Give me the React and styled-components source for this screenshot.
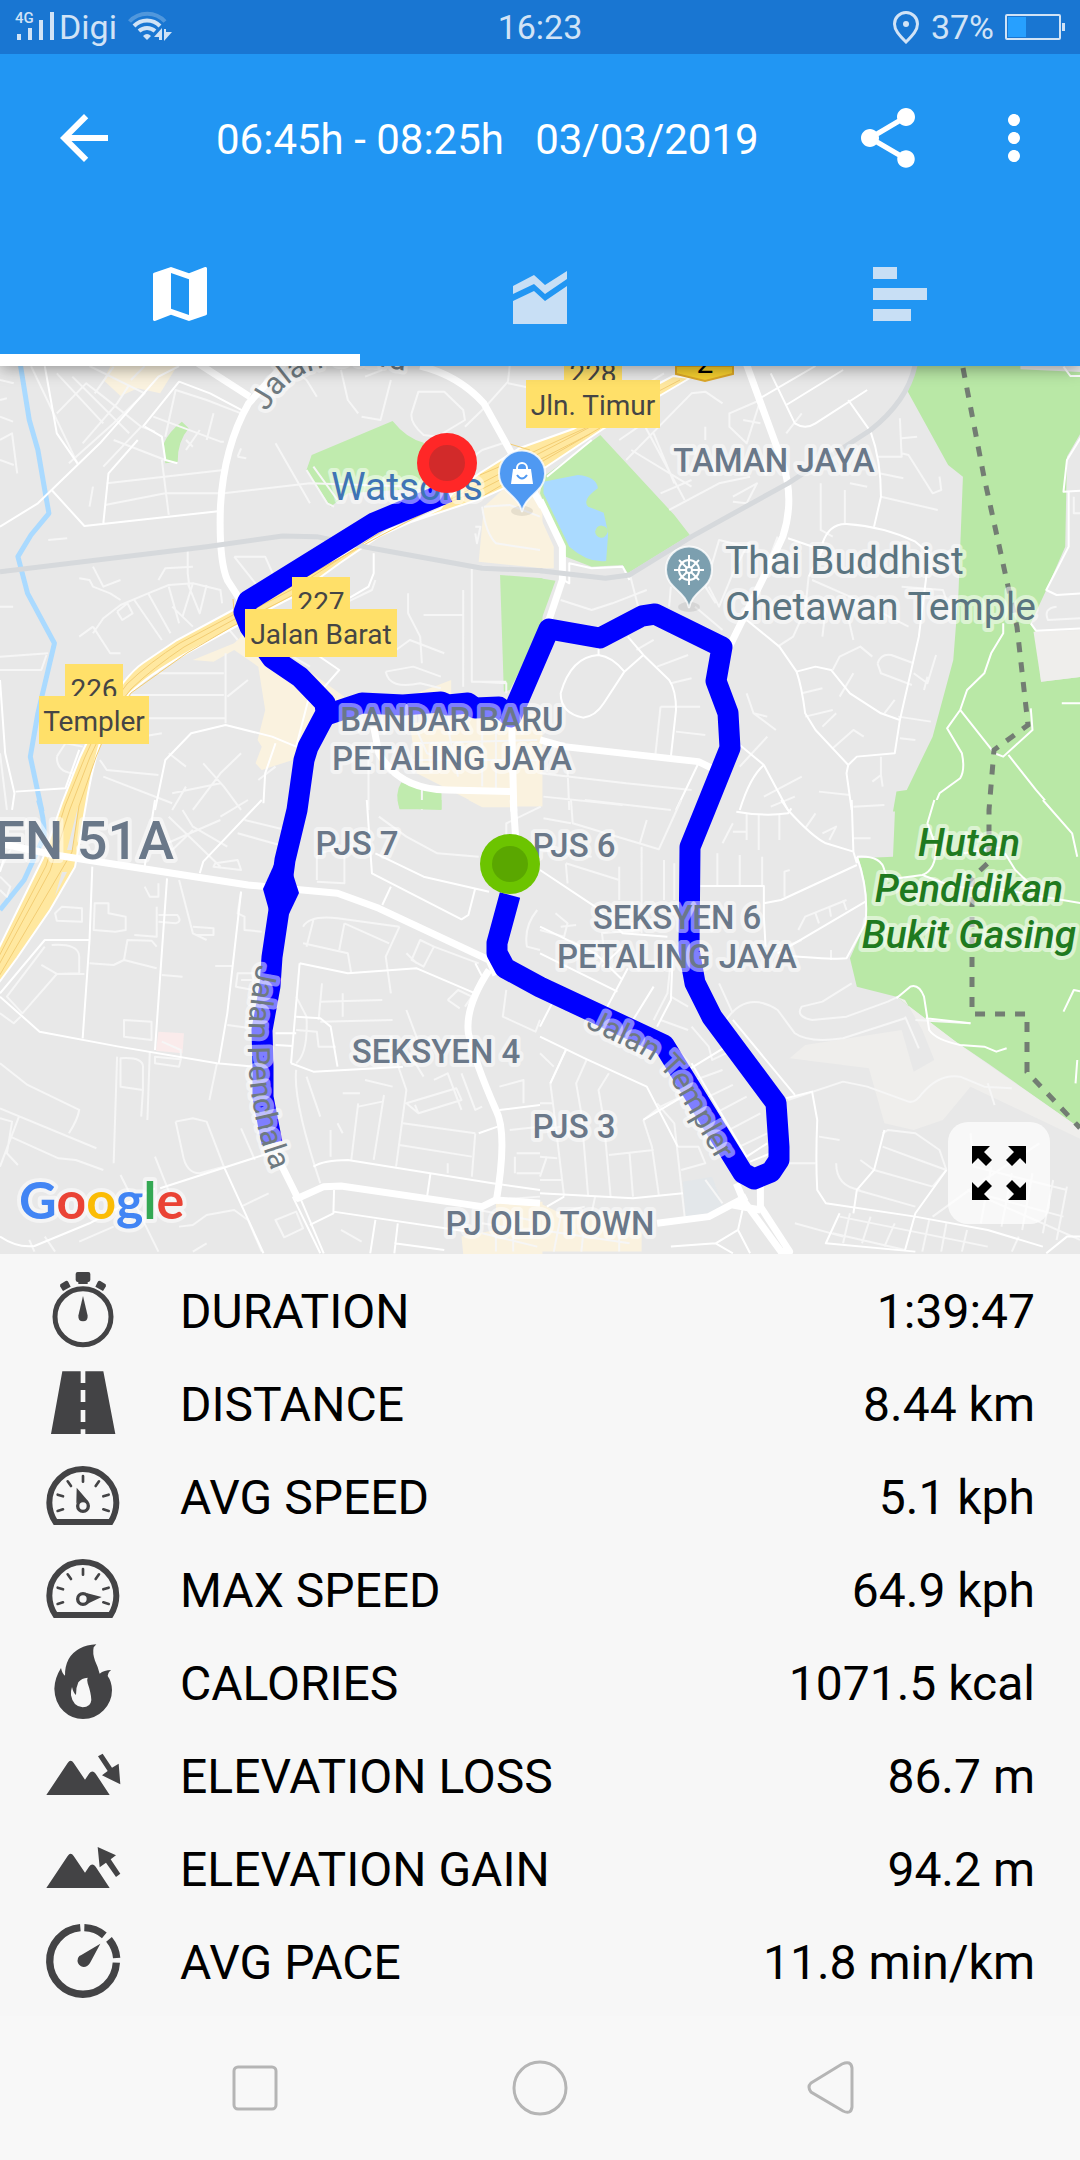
import React from "react";
import styled, { createGlobalStyle } from "styled-components";
import { MdArrowBack, MdMap, MdMoreVert, MdShare } from "react-icons/md";

const GlobalStyle = createGlobalStyle`
  :root {
    --primary: #2196f3;
    --primaryDark: #1976d2;
    --surface: #f7f7f7;
    --icon: #434345;
    --statusText: #d1e3f6;
  }
  * {
    box-sizing: border-box;
  }
  body {
    margin: 0;
    background: var(--surface);
    font-family: Roboto, sans-serif;
  }
`;

/* ---------- status bar ---------- */

function StatusBar() {
  return (
    <StatusWrapper>
      <StatusGroup>
        <svg width="40" height="32" viewBox="15 12 40 32" fill="currentColor">
          <text x="15" y="24" fontSize="15" fontWeight="500">
            4G
          </text>
          <path d="M17 35h4v6h-4zM28 29h4v12h-4zM39 21h4v20h-4zM50 13h4v28h-4z" />
        </svg>
        <span>Digi</span>
        <WifiIcon />
      </StatusGroup>
      <span>16:23</span>
      <StatusGroup $end>
        <svg width="28" height="34" viewBox="892 10 28 34" fill="none">
          <path
            d="M906 42C899 35 894.500 30 894.500 24A11.500 11.500 0 0 1 917.500 24C917.500 30 913 35 906 42Z"
            stroke="currentColor"
            strokeWidth="3"
          />
          <circle cx="906" cy="24" r="3" fill="currentColor" />
        </svg>
        <span>37%</span>
        <svg width="60" height="28" viewBox="1004 13 60 28">
          <rect x="1005" y="15" width="54" height="24" rx="1" fill="none" stroke="currentColor" strokeWidth="2" />
          <rect x="1007" y="17" width="18" height="20" fill="#27a0ff" />
          <rect x="1061" y="23" width="3" height="8" fill="currentColor" />
        </svg>
      </StatusGroup>
    </StatusWrapper>
  );
}

function WifiIcon() {
  return (
    <svg width="46" height="32" viewBox="127 12 46 32" fill="none" stroke="currentColor" strokeWidth="4">
      <path d="M129.500 22.500A24 24 0 0 1 165 22.500" opacity="0.3" />
      <path d="M134 27A18 18 0 0 1 160 27" />
      <path d="M139 32A12 12 0 0 1 155 32" />
      <path d="M143 37Q147 33 151 37L147 41Z" fill="currentColor" stroke="none" />
      <path d="M154 38L162 29V41H159V38ZM164 42V30H166V33H172L164 42Z" fill="currentColor" stroke="none" />
    </svg>
  );
}

/* ---------- map ---------- */

// Each tile is drawn on its own 1568 x 1350 grid and placed on the map by its origin.
const tiles = [
  {
    id: "nw",
    x: 0,
    y: -6,
    areas: [
      ["#faf2df", "M300 60L330 0H525L465 100L400 85L350 108Z"],
      ["#faf2df", "M1405 440L1480 370L1575 385V625L1390 605Z"],
      ["#faf2df", "M560 900L680 850L710 820L840 890L1000 1010L920 1080L850 1200L760 1230L742 1210L760 1160L748 1140L770 1050L750 920L680 870L620 905Z"],
      ["#faf2df", "M1190 1090L1575 1060V1340H1400L1210 1240Z"],
      ["#faf2df", "M1210 1000L1310 960V1010Z"],
      ["#c0ebae", "M905 285L1140 183Q1180 235 1230 248L1300 380L1010 400L960 440L890 330Z"],
      ["#c0ebae", "M528 185L548 205Q515 245 516 305L480 310L476 250Q490 215 528 185Z"],
      ["#c0ebae", "M1452 645L1575 655V800L1480 990L1463 995Z"],
      ["#c0ebae", "M1165 1268L1225 1288L1282 1300V1348H1160Q1145 1300 1165 1268Z"],
    ],
    water: ["M57 0L85 180L110 270L130 390L142 460L90 525L52 590L80 700L158 850L110 1060L88 1190L122 1355"],
    rail: ["M0 635L600 560L820 528L920 530L1080 565L1400 625L1575 632"],
    minor: [
      "M165 160L250 70L300 110L410 200M210 50L375 220M165 40L300 190M90 18L225 310M260 18L420 100L330 190L200 310M300 320L410 200L450 215M330 240L480 300M275 100L330 20M375 75L340 130L240 250M420 18L380 60M0 60L40 70M0 120L20 115M0 170L38 185M0 240L35 220L50 340M0 300L40 315",
      "M445 170L640 245L650 245M480 230L510 90L600 120L700 160M470 300L490 465M310 370L650 330M305 435L480 400L645 400M270 380L260 440M580 210L540 270M620 160L600 240M540 240L560 260M650 400L900 370L1210 380M800 250L900 430M690 290L715 295M690 290L700 265",
      "M850 30L890 60L920 110M990 30L1010 120L1040 160M1060 50L1110 30M1050 170L1105 180L1135 60M1195 160L1215 95L1290 95L1345 150L1350 180L1270 230L1230 225Q1190 190 1195 160M1475 65L1480 18M1475 65L1410 140L1350 200M1475 70L1568 90M1310 340L1400 270L1460 250",
      "M890 330L950 430L970 440M910 320L980 420M1405 440L1480 435L1568 470M1400 440Q1410 520 1440 550L1568 570M1380 500L1395 500L1385 550L1380 520M545 570L545 640L550 680M270 620L300 680L350 660M230 655L260 660L270 680L320 700L350 720M140 540L195 535M0 740H38",
      "M270 820L300 775L350 735L430 700L490 675L560 670L640 690L645 730M340 755L370 730L385 760L355 780L340 755M390 720L470 840M430 700L495 820M490 680L520 790M560 670L530 770M600 675L580 760L545 670M270 800L230 830M270 800L320 880L350 880M500 740L560 800M460 660L480 625L560 620",
      "M400 940H650M380 1005H650M320 1075H655M655 880V1090M0 890L140 880M0 930L120 930L135 885M165 1190L190 1150L240 1160M165 1190Q165 1240 220 1240M290 1200L310 1230L460 1245M300 1150L470 1120M590 1210L650 1280L700 1350M300 1250L500 1330M490 1180L540 1220M640 1270L500 1300M750 1260L800 1220M700 1180L640 1240L560 1350M540 1280L500 1350",
      "M1185 700V760L1220 830M1150 870L1190 840L1290 880M1220 830L1225 910M1230 765L1345 765M1370 620V965H1470M1345 690V980M1120 935Q1130 990 1220 970L1280 985M1120 935L1200 920L1280 950M1090 660L1080 690L1000 730M1070 1170V1350M1390 965L1470 970V1000M1400 1100V1280M1440 1080V1290M1200 1150L1560 1140M1200 1200H1560M680 590L770 590L800 660M680 590L780 720M850 890L900 920",
      "M0 1180L20 1350M1210 1110L1240 1180L1290 1200M1300 1100L1330 1250M1225 1290V1350M600 800L650 790L690 840M720 960L660 1010",
    ],
    medium: [
      "M0 500L110 430L290 250L460 50L520 18M130 18L165 220L225 310M150 390L245 498L640 453M110 430L0 500M420 200L470 230L480 300L515 310M415 200L520 65L610 100L710 155L705 165M300 490L315 340L400 240",
      "M450 1350L480 1200L555 1120L655 1095L790 1130L860 1160M0 960L15 1180L42 1300L35 1350M860 1160L900 1000M1085 580V640L1070 680L1005 720M900 870L985 930L900 1030",
      "M765 1330L770 1240L800 1150M45 1295L190 1285L230 1170",
    ],
    major: [
      "M560 0L725 110M835 0L722 130Q650 260 640 440Q635 600 660 660L710 740",
      "M1220 18Q1330 45 1405 130L1480 270L1575 440",
      "M1085 1100L1100 1180Q1160 1290 1300 1290L1490 1295M1485 1060L1492 1355",
    ],
  },
  {
    id: "ne",
    x: 540,
    y: -6,
    areas: [
      ["#b9e8a6", "M1090 0L1068 95L1185 315L1228 350L1215 700L1200 900L1140 1130L1065 1290L1035 1295L1025 1355H1575V0Z"],
      ["#e8e8e8", "M1395 0V28L1575 36V0ZM1575 210L1530 290L1525 560L1470 690L1425 790L1440 815L1455 965L1575 950Z"],
      ["#efeeec", "M1433 815L1455 965L1575 950V810Z"],
      ["#c0ebae", "M10 350L175 225L390 465L435 525L255 640L240 615L150 620L75 590L0 400Z"],
      ["#c0ebae", "M0 655L45 662L0 790Z"],
      ["#faf2df", "M0 470L40 560V625H0Z"],
      ["#aadaff", "M10 365L110 345Q165 350 168 385Q120 420 140 440L185 458L198 520L192 603Q140 610 85 560L10 400Z"],
      ["#c0ebae", "M160 515Q165 495 180 497Q197 500 197 515Q190 535 176 533Q162 530 160 515Z"],
    ],
    water: [],
    rail: ["M0 632L190 655L260 645L440 530L720 370L960 210Q1070 120 1090 10"],
    minor: [
      "M250 300L440 100L480 95L530 130M300 190L420 420M330 220L390 370M265 270L440 380M350 400L440 360M375 450L520 370L610 350M550 160L640 120L600 250L550 200ZM590 180L640 190M560 410L630 370L600 430L560 425M480 240V200M230 240L300 190M280 90L360 40",
      "M1045 175L1050 290L980 290M1050 235L1095 230M1050 280L1070 285L1140 400L1165 390L1160 350M990 410L1155 450M985 340L1055 355M815 370V510L850 530M885 390V490M900 370L950 380M715 220L760 160",
      "M380 680L375 740M490 680L520 740L560 640L600 560M450 740L530 810M260 640L285 740M60 720L150 750L210 730L310 690M510 730L480 680L520 540L600 560M780 650L770 750L735 830L690 860M790 660L900 710L1070 800M690 530L650 640M830 740L820 830M890 750L910 840M1050 680L1170 690L1180 720",
      "M850 930L870 890L930 860L965 890M980 910Q990 880 1020 885L1085 910M1080 975L990 940L980 910M910 940L870 1010M1150 885L1125 970L1085 940M1125 950L1115 990M760 1000L820 985M770 1070L850 1050M600 1000L620 1060L685 1110M620 1060L660 1070M850 1165L910 1110L940 1130M1030 1020L1000 1060M1040 1070L1135 1085M1045 1135L1090 1140M990 1190V1245L965 1265M990 1245L995 1280M820 1100L860 1060M650 1310L760 1250M670 1340L740 1310M810 1295L900 1305M580 1220L660 1130M340 920L430 885M380 970L440 955M350 1040L465 1040M335 1185L350 1040M395 1115L480 1125M280 870L330 840M0 1240L250 1270M250 1270L440 1290M10 1310L240 1335M80 1230L85 1350M1550 410V460L1568 460M1500 740Q1460 745 1475 780L1568 775",
    ],
    medium: [
      "M630 120L800 18M670 40L740 190Q770 210 800 190L950 90M715 135L880 30M895 120L960 215Q990 300 990 410L970 500M820 550Q840 490 890 492Q1000 500 1090 545L1130 580L1100 830L1045 1080L1030 1180L920 1190L895 1215",
      "M600 780L695 860L745 935Q760 980 770 1060L800 1110L895 1215L890 1240L905 1350M745 935L800 920L845 930L900 1000L990 1060L1045 1080M720 535L820 570L780 650",
      "M170 885Q90 890 60 1000Q60 1060 125 1073Q160 1070 185 1030L245 935Q210 890 170 885V860M245 935L300 885M255 830L300 885L375 960Q395 990 395 1050L380 1190M580 1155L650 1215L720 1350M650 1215Q610 1250 580 1350M395 1350L460 1210",
      "M1345 790V820L1310 880L1290 940L1240 990L1220 1050L1182 1105L1225 1180Q1235 1230 1220 1255L1160 1300L1140 1350M1220 1050L1320 1180L1345 1190L1430 1110L1425 1045M1360 1185L1440 1290L1490 1350M1515 1030H1575",
      "M1575 225L1530 300L1520 395L1575 392M1535 395V560L1470 690L1500 705L1575 700M1425 790L1440 812L1575 805M1520 20L1540 48H1575",
      "M20 350L150 240M60 655L85 670V610L150 625L240 620L260 660",
    ],
    major: ["M595 0L705 310Q740 420 705 530L660 630L550 860", "M0 420L65 560V660L0 860", "M0 1140L70 1160L460 1205L500 1225"],
  },
  {
    id: "sw",
    x: 0,
    y: 434,
    areas: [
      ["#c0ebae", "M1155 0H1282V30L1160 25Z"],
      ["#faf2df", "M1360 0H1500V22H1400Z"],
      ["#faebeb", "M460 695L534 700L530 760L453 752Z"],
      ["#faf2df", "M1440 1200L1575 1205V1362H1345L1340 1310L1440 1290Z"],
    ],
    water: ["M112 0Q130 60 128 110L70 240L0 330"],
    rail: [],
    minor: [
      "M160 340L180 320L238 325V365L165 362ZM275 310H315V340L365 350V390L335 395L272 390ZM420 260L435 290L460 290V250M460 345L515 345Q530 365 510 370L460 365M520 240L560 400L600 420M560 380L620 385V405H570M390 405L455 410V320M150 435Q230 430 230 470V520L165 522L65 640L20 590L130 440M120 495L165 522H245M260 490L330 495L360 480L370 420L440 422L455 440M360 480L455 505M470 525L530 530",
      "M360 660L440 665V720L360 710ZM350 775Q420 770 415 805V870L350 860ZM450 770L525 778L520 800L450 790ZM340 770L330 1090M415 870L410 950M435 755L428 960M470 725L525 750V780M630 790L608 900M700 275L690 340L710 350V390L760 395M690 520H735V570L685 560ZM700 540L735 540M625 498H675M660 675L730 685",
      "M0 790L80 855L230 930Q225 960 200 1000M0 925L280 1045M55 950L0 1100M0 955L35 965L20 1060L52 1095M30 1010L170 1075L220 1080L300 1110M510 965L560 955L600 965L650 1100L580 1120Q540 1120 530 1060L510 965M450 1070L500 1200M700 985L740 1080M350 1125L460 1355M230 1325L330 1280M520 1280L560 1275L600 1245L680 1230L720 1260L760 1355M700 1220L780 1180M560 1355L600 1330M130 1310L160 1355M85 1320L100 1355M800 1260L860 1235L880 1285L825 1312ZM990 1290L1050 1325",
      "M530 30L560 80L660 140M490 50L640 200M560 90L500 150L480 120M440 150L640 60M640 50L720 0M625 190L690 180L700 210L620 200ZM690 100L830 140M710 60L830 90M920 240V170Q950 140 1000 160L1000 250L920 245M880 380Q900 345 980 355L1160 380M880 430L1010 460L1020 520M910 360L890 440M1000 370L985 450M1160 380L1120 470L1135 580M1000 370L1130 430M1220 420L1260 440L1230 500L1195 480ZM1260 440L1390 490M1180 460L1210 490",
      "M935 550L925 660M995 580V650M930 605L1110 600M930 665L1140 660M1180 630L1220 740M860 690L920 695L925 740L975 740M860 590L890 650Q895 760 860 790M1300 600L1330 570L1370 590L1350 620M1300 600L1335 625M1150 780L1180 870L1150 1100M1200 780L1230 830M1260 840L1300 820L1340 930M1180 910L1325 865L1340 900L1215 940ZM1215 940L1205 915M1340 820L1380 930L1400 920M1040 910L1020 1080M1115 885L1085 1080M1040 920L1110 905M960 990V1070M1170 970L1380 1000M1160 1035L1370 1070M1380 1000L1370 1130M995 880H1045M860 810Q850 900 930 1150M890 830L930 950M1060 840L1140 860M1450 860L1520 840V910M1300 1090V1120M1480 990L1568 980",
      "M1570 20L1470 70L1470 130M1100 50L1180 110L1270 160L1390 170M1470 570L1460 650L1555 695L1568 660M1500 1060H1568M1500 1120H1568M1495 1120V1070M1440 1200L1568 1190M1390 1230L1540 1260M1400 1270L1568 1300M1400 1300L1560 1340M1440 1240V1355M1490 1240V1355M980 970L995 1000M1560 330Q1520 380 1530 440L1568 450",
      "M0 210L40 130M0 230L30 260L20 290L0 270M75 330H120M75 330L60 400L0 500M0 640L40 670L60 650",
    ],
    medium: [
      "M268 200L260 420L240 715M485 235L450 750M700 275L660 640L635 790M0 590L115 695L345 740L630 790L740 800M0 580L130 420H260M580 220L590 185L760 0M420 200L450 0M10 180L0 215",
      "M870 490L1010 520L1210 505L1380 580M1065 0L1080 220L1340 358L1360 345L1380 265M1090 160L1230 230L1420 275M1110 315L1135 260M860 650L930 655L960 680L980 800M845 790L910 815L1170 800M870 490L845 790M800 700H860M800 735L850 738",
      "M910 1100Q940 1080 1010 1080L1430 1150L1568 1170M465 1165L780 1060M650 1100L765 1360M850 1190L930 1360M870 1190L940 1360M970 1170L968 1240L900 1275M968 1235L1390 1300M1090 1260L1075 1360M1155 1270L1145 1360M1250 1120L1240 1190M1145 1330L1290 1350M1450 930L1568 915M1390 1000L1445 980M0 1310Q50 1345 100 1338L260 1270L450 1165M1380 490L1400 530",
    ],
    major: [
      "M0 130L160 165L720 255L980 280L1100 325L1420 480L1440 525",
      "M1420 510Q1350 620 1360 700Q1380 790 1440 930Q1475 1000 1440 1210",
      "M800 1060L865 1195L940 1160L990 1158L1400 1220L1440 1200L1568 1210M1490 0L1497 110",
    ],
  },
  {
    id: "se",
    x: 540,
    y: 434,
    areas: [
      ["#b9e8a6", "M1032 0L1025 170L925 175Q960 280 945 370L900 475L920 560L1035 590L1200 720L1300 790L1575 990V0Z"],
      ["#efeeec", "M1035 590L1220 735L1575 990V1020L1250 860L1170 960L1085 990L1000 970L955 805L725 775L770 735L1050 690L1085 815L1145 780L1110 690L1060 600Z"],
      ["#e3e7ea", "M415 1145L500 1130L530 1215L490 1240L422 1250Z"],
      ["#faf2df", "M0 1210L60 1240H250L295 1300V1355H0Z"],
    ],
    water: [],
    rail: [],
    minor: [
      "M90 0L95 70L345 148L410 0M10 55L90 70M130 0L380 30M75 190L230 240M75 190L80 250M230 200V300M295 140V400M0 150L150 170M310 60L290 130M360 180V300M390 190V300M515 160V255M580 165V255M645 170V255M600 40V120M635 45V150M695 45V120M560 95H600M530 130L560 70M770 85L800 40M820 100L860 80L840 120M910 20L1000 15M910 115H960M710 290V215L725 210M750 390L770 350L890 300M800 340L810 370M840 320L845 350M880 300L890 330M845 450V480M640 470L760 420",
      "M45 340L80 370L70 410L0 390M60 380L105 375M190 490L180 400L290 390M170 500L200 440M350 660L430 690M380 590L430 620M440 680L490 740L500 780L540 760M330 660L370 580L380 480M520 550L560 640M500 690L540 660Q600 570 690 630L740 700Q780 730 880 715L1060 655M905 550L820 605L760 620Q740 650 790 660L890 650L1010 605L1040 590M1060 650L1100 745M450 840L530 810M470 900L560 855M490 950L600 890M530 1000L640 940M560 1050L660 1000",
      "M300 960L350 920L430 880M0 760L40 800M75 750L30 850L40 930L70 1190M135 780L105 850L120 940L140 1190M200 820L170 870L185 960L205 1190M0 910H40M0 990L60 980M200 1065L330 1050M260 1060L270 1190M300 960L325 1040L345 1185M340 910L390 970L420 1250M400 1040L460 1040L480 1090L410 1110M0 1070L50 1075M20 1070L0 1130M0 1140L65 1140M50 1240L130 1220M160 1190L150 1240M0 1290L260 1330M60 1250L40 1355M130 1260L120 1355M230 1240V1355M480 1140L530 1210",
      "M720 1090H800M860 1090Q860 1160 930 1170M810 1010L870 1020M995 1000L1010 990L1090 1000L1160 1050L1180 1110L1140 1160M995 1040L1100 1080L1180 1110M930 1080L970 1110L1140 1160M920 1170L1090 1220M740 1270L880 1310M900 1240L880 1330M960 1250L935 1330M1030 1270L1000 1340M850 1300L1060 1350M870 1250L1300 1340M1140 1250L1260 1160L1450 1030M1240 1170L1568 1320M1310 1100L1280 1270M1370 1120L1340 1280M1430 1120L1400 1290M1490 1140L1460 1300M1530 1160L1500 1320M1270 1180L1520 1250M1250 1000L1260 1100L1530 1170M1130 1260L1110 1355M1180 1270L1165 1355M1240 1290L1225 1355M1390 1310L1370 1355M720 900L880 845L950 860L1070 905Q1090 910 1110 880Q1160 820 1220 830L1290 860L1370 865M1300 850L1320 915M1090 660L1250 670",
    ],
    medium: [
      "M570 35Q650 50 720 40L730 25M700 0L720 30Q790 110 830 130L910 155L920 190M905 0L910 155M650 310L700 300L920 195M465 258H650L650 350L655 440M690 460L945 305M920 170Q990 165 1000 210L1010 240M920 170Q955 270 945 370L890 475Q850 480 700 465",
      "M0 380L160 460L240 540M0 460L225 575M0 210L160 320L240 400L370 410M180 500L240 440M255 505L180 650M330 560L270 660M385 470L380 600L340 680M0 710L130 775L310 860L400 1040M0 680L40 600M300 960L430 880M430 810L540 740L560 760M560 660L740 885M440 790L600 1070L660 1030M715 895L790 875L805 960Q800 1080 805 1170L830 1210L1090 1250M610 1085L670 1060M30 850L75 750M0 1180L270 1195L415 1180M70 1190L20 1220",
      "M1000 990L970 1110L920 1170L910 1240M870 1240L830 1330L1090 1355M1180 1110L1090 1240L1060 1350M1090 1250L1300 1290L1460 1340M1470 1360L1530 1310L1575 1310M590 1220L575 1290L510 1330L380 1340M510 1330L560 1360M575 1290L610 1360",
      "M1035 595L1075 560Q1100 550 1115 590L1130 690Q1150 720 1220 735L1290 740L1325 755L1355 745M1120 655L1250 670M1145 0L1125 70L1150 140Q1150 210 1110 225L1040 235M1110 225L1200 260L1350 270L1575 310M1460 0L1545 100L1560 170M1350 160L1380 210L1440 270M1575 575L1550 570L1520 635M1560 780L1555 850M1230 160L1350 140",
    ],
    major: ["M340 1270L490 1250L600 1190M570 1150L590 1200L700 1355L725 1355L640 1220L640 1150M560 1215L640 1230"],
  },
];

function Tile({ tile, children }) {
  return <TileGroup transform={`translate(${tile.x} ${tile.y}) scale(0.3444 0.3333)`}>{children}</TileGroup>;
}

function BaseTile({ tile }) {
  return (
    <Tile tile={tile}>
      {tile.areas.map(([fill, d]) => (
        <path key={d} d={d} fill={fill} />
      ))}
      {tile.water.map((d) => (
        <Line key={d} d={d} $color="#aadaff" $width={5} />
      ))}
      {tile.minor.map((d) => (
        <Line key={d} d={d} $color="#f6f6f6" $width={2} />
      ))}
      {tile.medium.map((d) => (
        <Line key={d} d={d} $color="#fff" $width={2} />
      ))}
    </Tile>
  );
}

function RoadTile({ tile }) {
  return (
    <Tile tile={tile}>
      {tile.major.map((d) => (
        <Line key={d} d={d} $color="#fff" $width={7} />
      ))}
      {tile.rail.map((d) => (
        <Line key={d} d={d} $color="#d6d9dc" $width={5} />
      ))}
    </Tile>
  );
}

function Highway() {
  return (
    <g>
      <path
        d="M-5 590L43 492L62 437L80 391L88 374Q104 340 123 317Q134 303 143 297L177 274L233 244L293 214L333 194L373 173L440 143L453 127L480 107L520 82L573 63L673 10L690 12L603 63L543 103L520 115L480 133L390 163L340 197L293 231L233 262L187 287Q150 308 130 327Q112 346 103 367Q94 395 88 427L78 484L75 501L50 544L17 592L-5 622Z"
        fill="#ffe8a0"
        stroke="#fff"
        strokeWidth="2"
      />
      <path d="M78 441L73 484H67ZM67 506L55 530L62 506Z" fill="#e8e8e8" />
      <g fill="none" stroke="#f3cd73">
        <path d="M-5 598L46 500L65 440L85 391Q104 346 127 318Q150 296 180 277L233 249L293 218L380 170L480 118L573 70L680 14" />
        <path d="M-5 606L50 505L70 443L90 391Q108 350 131 323Q154 301 184 281L233 254L293 223L390 160L480 124L590 68" />
        <path d="M-2 612L52 520L72 486L79 440L96 391Q110 354 131 327L187 287L233 260L293 229" />
        <path d="M480 109L520 92L590 60M483 130L543 95L600 62M233 233L234 244M510 78L530 84" />
      </g>
    </g>
  );
}

const places = [
  { text: "TAMAN JAYA", x: 774, y: 106 },
  { text: "BANDAR BARU", x: 452, y: 365 },
  { text: "PETALING JAYA", x: 452, y: 404 },
  { text: "PJS 7", x: 357, y: 489 },
  { text: "PJS 6", x: 574, y: 491 },
  { text: "SEKSYEN 6", x: 677, y: 563 },
  { text: "PETALING JAYA", x: 677, y: 602 },
  { text: "SEKSYEN 4", x: 436, y: 697 },
  { text: "PJS 3", x: 574, y: 772 },
  { text: "PJ OLD TOWN", x: 550, y: 869 },
];

const exits = [
  { number: "228", name: "Jln. Timur", x: 593, y: 14, width: 134 },
  { number: "227", name: "Jalan Barat", x: 321, y: 243, width: 152 },
  { number: "226", name: "Templer", x: 94, y: 330, width: 110 },
];

function Pin({ x, y, color, children }) {
  return (
    <g transform={`translate(${x} ${y})`}>
      <ellipse cx="0" cy="37" rx="11" ry="5" fill="#000" opacity="0.08" />
      <path
        d="M0 38C-2 28 -8 24 -16 16A23 23 0 1 1 16 16C8 24 2 28 0 38Z"
        fill={color}
        stroke="#fff"
        strokeOpacity="0.8"
        strokeWidth="2"
      />
      {children}
    </g>
  );
}

function Marker({ x, y, color, core }) {
  return (
    <g>
      <circle cx={x} cy={y} r="30" fill={color} />
      <circle cx={x} cy={y} r="18" fill={core} />
    </g>
  );
}

function RouteMap() {
  return (
    <MapWrapper>
      <MapCanvas viewBox="0 0 1080 888" preserveAspectRatio="xMidYMid slice">
        <defs>
          <path id="utara" d="M267 46Q282 16 311 5Q350 -8 410 6" />
          <path id="penchala" d="M257 598Q230 725 284 832" />
          <path id="templer" d="M585 661L640 688Q666 702 678 727L730 818" />
        </defs>
        <rect width="1080" height="888" fill="#e8e8e8" />
        {tiles.map((tile) => (
          <BaseTile key={tile.id} tile={tile} />
        ))}
        <Highway />
        {tiles.map((tile) => (
          <RoadTile key={tile.id} tile={tile} />
        ))}
        <Border d="M963 2L984 111L1017 261L1028 359L994 384L989 444V496L972 512V648H1027V706L1080 762" />
        <path d="M676 0H733V8L705 15L676 8Z" fill="#f6cf2e" stroke="#dca728" strokeWidth="2" />
        <text x="705" y="7" fontSize="30" textAnchor="middle">
          2
        </text>

        <Route d="M448 126L374 157L248 235L244 246L250 261L272 292L300 311L325 337L326 347L308 381L304 394L297 444L285 494L281 524L279 544L272 591L270 620L262 664L263 701V731L272 777" />
        <Route d="M326 349L362 337L403 339L441 336L448 339L468 337L475 342L499 341L511 351L549 263L600 272L642 250L655 248L722 281L716 315L728 347L730 382L705 444L690 481L689 584L695 617L712 651L776 737L779 781L779 794L771 806L754 813L743 807L664 679L540 621L505 602L497 587V577L510 529" />
        <path d="M277 492L263 523L270 548H289L299 527L292 505Z" fill="#00f" />

        {places.map(({ text, x, y }) => (
          <PlaceLabel key={text + y} x={x} y={y}>
            {text}
          </PlaceLabel>
        ))}
        <CityLabel x="174" y="493">
          EN 51A
        </CityLabel>
        <PoiLabel x="331" y="134" $color="#3f74b5">
          Watsons
        </PoiLabel>
        <PoiLabel x="725" y="208" $color="#5b7581">
          Thai Buddhist
        </PoiLabel>
        <PoiLabel x="725" y="254" $color="#5b7581">
          Chetawan Temple
        </PoiLabel>
        <ParkLabel x="969" y="490">
          Hutan
        </ParkLabel>
        <ParkLabel x="969" y="536">
          Pendidikan
        </ParkLabel>
        <ParkLabel x="969" y="582">
          Bukit Gasing
        </ParkLabel>
        <RoadLabel>
          <textPath href="#utara">Jalan Utara</textPath>
        </RoadLabel>
        <RoadLabel>
          <textPath href="#penchala">Jalan Penchala</textPath>
        </RoadLabel>
        <RoadLabel>
          <textPath href="#templer">Jalan Templer</textPath>
        </RoadLabel>

        {exits.map(({ number, name, x, y, width }) => (
          <g key={number}>
            <rect x={x - 29} y={y - 32} width="58" height="40" fill="#ffe069" />
            <ExitLabel x={x} y={y + 3}>
              {number}
            </ExitLabel>
            <rect x={x - width / 2} y={y} width={width} height="48" fill="#ffe069" />
            <ExitLabel x={x} y={y + 35}>
              {name}
            </ExitLabel>
          </g>
        ))}

        <Pin x={522} y={108} color="#4f99f2">
          <path d="M-9 -5H9L11 10H-11Z" fill="#fff" />
          <path d="M-5 -4V-6A5 5 0 0 1 5 -6V-4" fill="none" stroke="#fff" strokeWidth="2" />
          <path d="M-5 1Q0 8 5 1" fill="none" stroke="#4f99f2" strokeWidth="2" />
        </Pin>
        <Pin x={689} y={204} color="#7c9faf">
          <g fill="none" stroke="#fff" strokeWidth="2">
            <circle r="10" />
            <circle r="3" />
            <path d="M0 -15V-3M0 3V15M-15 0H-3M3 0H15M-10 -10L-2 -2M2 2L10 10M10 -10L2 -2M-2 2L-10 10" />
          </g>
        </Pin>
        <Marker x={447} y={97} color="#ff2727" core="#d22a2a" />
        <Marker x={510} y={498} color="#6cc400" core="#5aa700" />

        <Logo x="19" y="853">
          <tspan fill="#4285f4">G</tspan>
          <tspan fill="#ea4335">o</tspan>
          <tspan fill="#fbbc05">o</tspan>
          <tspan fill="#4285f4">g</tspan>
          <tspan fill="#34a853">l</tspan>
          <tspan fill="#ea4335">e</tspan>
        </Logo>
      </MapCanvas>
      <ExpandButton aria-label="Full screen">
        <svg width="54" height="54" viewBox="0 0 54 54">
          <path d="M0 0H18L12 6L20 14L14 20L6 12L0 18ZM54 0H36L42 6L34 14L40 20L48 12L54 18ZM0 54H18L12 48L20 40L14 34L6 42L0 36ZM54 54H36L42 48L34 40L40 34L48 42L54 36Z" />
        </svg>
      </ExpandButton>
    </MapWrapper>
  );
}

/* ---------- statistics ---------- */

const gauge = (
  <>
    <path
      d="M105 816Q87 788 87 758A100.500 101 0 0 1 288 758Q288 788 271 816Z"
      fill="none"
      stroke="currentColor"
      strokeWidth="18"
    />
    <path d="M98 807H278L273 825H103Z" />
    <path
      d="M188 678V695M142 694L152 708M236 694L226 708M112 734L128 739M265 734L249 739M112 783L128 778M265 783L249 778"
      stroke="currentColor"
      strokeWidth="8"
      strokeLinecap="round"
    />
  </>
);

const mountains = (
  <path d="M78 525L142 429Q151 416 160 429L194 479L206 461Q216 448 226 461L268 525Z" />
);

const stats = [
  {
    label: "DURATION",
    value: "1:39:47",
    viewBox: "74 66 228 228",
    icon: (
      <>
        <circle cx="188" cy="200" r="84" fill="none" stroke="currentColor" strokeWidth="15" />
        <path d="M188 138L202 197Q203 214 188 214Q173 214 174 197Z" />
        <path d="M172 66H204Q210 66 210 72V90Q210 96 202 97V102H174V97Q166 96 166 90V72Q166 66 172 66Z" />
        <path d="M120 103L136 93Q141 91 144 96L151 110L128 123L119 109ZM256 103L240 93Q235 91 232 96L225 110L248 123L257 109Z" />
      </>
    ),
  },
  {
    label: "DISTANCE",
    value: "8.44 km",
    viewBox: "74 345 228 228",
    icon: (
      <path
        fillRule="evenodd"
        d="M126 364H249L285 552H92ZM181 364V399H195V364ZM181 420V456H195V420ZM181 480V516H195V480ZM181 538V552H195V538Z"
      />
    ),
  },
  {
    label: "AVG SPEED",
    value: "5.1 kph",
    viewBox: "74 624 228 228",
    icon: (
      <>
        {gauge}
        <circle cx="188" cy="768" r="16" fill="none" stroke="currentColor" strokeWidth="10" />
        <path d="M169 713L168 760Q180 745 205 755Z" />
      </>
    ),
  },
  {
    label: "MAX SPEED",
    value: "64.9 kph",
    viewBox: "74 624 228 228",
    icon: (
      <>
        {gauge}
        <circle cx="188" cy="768" r="16" fill="none" stroke="currentColor" strokeWidth="10" />
        <path d="M244 762L198 750Q212 768 200 783Z" />
      </>
    ),
  },
  {
    label: "CALORIES",
    value: "1071.5 kcal",
    viewBox: "74 72 228 228",
    icon: (
      <path
        fillRule="evenodd"
        d="M228 73Q170 76 145 117Q133 140 134 167Q126 162 122 144Q103 174 102 206Q103 248 130 274Q154 297 188 297Q225 297 250 271Q275 244 275 210Q274 184 262 168Q264 155 273 150Q251 150 238 161Q232 138 224 122Q216 100 220 82ZM202 173Q199 178 202 190Q212 218 213 240Q211 262 187 262Q158 260 152 226Q151 212 155 201Q159 219 167 225Q166 204 174 187Q184 174 202 173Z"
      />
    ),
  },
  {
    label: "ELEVATION LOSS",
    value: "86.7 m",
    viewBox: "74 351 228 228",
    icon: (
      <>
        {mountains}
        <path d="M233 409L247 401L275 443L295 431L300 493L245 466L262 453Z" />
      </>
    ),
  },
  {
    label: "ELEVATION GAIN",
    value: "94.2 m",
    viewBox: "74 351 228 228",
    icon: (
      <>
        {mountains}
        <path d="M232 402L287 427L271 439L300 482L287 492L257 449L238 463Z" />
      </>
    ),
  },
  {
    label: "AVG PACE",
    value: "11.8 min/km",
    viewBox: "74 909 228 228",
    icon: (
      <>
        <path
          d="M180 923A100 100 0 1 0 288 1028M192 923Q226 924 252 946M266 958Q287 984 289 1014"
          fill="none"
          stroke="currentColor"
          strokeWidth="22"
        />
        <path d="M240 971L209 1029Q198 1045 182 1039Q168 1030 173 1014Q176 1007 183 1005Z" />
      </>
    ),
  },
];

function StatRow({ label, value, viewBox, icon }) {
  return (
    <Row>
      <dt>
        <svg width="76" height="76" viewBox={viewBox} fill="currentColor" aria-hidden="true">
          {icon}
        </svg>
        <span>{label}</span>
      </dt>
      <dd>{value}</dd>
    </Row>
  );
}

function App() {
  return (
    <>
      <GlobalStyle />
      <Header>
        <StatusBar />
        <Toolbar>
          <IconButton aria-label="Back">
            <MdArrowBack />
          </IconButton>
          <h1>06:45h - 08:25h{"   "}03/03/2019</h1>
          <IconButton aria-label="Share">
            <MdShare />
          </IconButton>
          <IconButton aria-label="More options">
            <MdMoreVert />
          </IconButton>
        </Toolbar>
        <Tabs>
          <Tab $active aria-label="Map">
            <MdMap />
          </Tab>
          <Tab aria-label="Charts">
            <svg viewBox="0 0 72 72" fill="currentColor">
              <path d="M9 28L30 17L41 27L63 13V21L41 36L30 26L9 36ZM9 43L30 33L41 43L63 28V66H9Z" />
            </svg>
          </Tab>
          <Tab aria-label="Laps">
            <svg viewBox="0 0 72 72" fill="currentColor">
              <path d="M9 9H33V21H9ZM9 30H63V42H9ZM9 51H47V63H9Z" />
            </svg>
          </Tab>
        </Tabs>
      </Header>
      <main>
        <RouteMap />
        <Stats>
          {stats.map((stat) => (
            <StatRow key={stat.label} {...stat} />
          ))}
        </Stats>
      </main>
      <NavBar>
        <NavButton aria-label="Recent apps">
          <svg viewBox="0 0 72 72">
            <rect x="15" y="15" width="42" height="42" rx="4" />
          </svg>
        </NavButton>
        <NavButton aria-label="Home">
          <svg viewBox="0 0 72 72">
            <circle cx="36" cy="36" r="26" />
          </svg>
        </NavButton>
        <NavButton aria-label="Back">
          <svg viewBox="0 0 72 72">
            <path d="M22 31L53 12Q62 8 63 16V55Q62 63 54 59L22 40Q18 35 22 31Z" />
          </svg>
        </NavButton>
      </NavBar>
    </>
  );
}

const Header = styled.header`
  position: relative;
  z-index: 1;
  background: var(--primary);
  color: #fff;
  box-shadow: 0 2px 16px rgba(0, 0, 0, 0.4);
`;

const StatusWrapper = styled.div`
  display: grid;
  grid-template-columns: 1fr auto 1fr;
  align-items: center;
  height: 54px;
  padding: 0 15px;
  background: var(--primaryDark);
  color: var(--statusText);
  font-size: 34px;
`;

const StatusGroup = styled.div`
  display: flex;
  align-items: center;
  justify-content: ${({ $end }) => ($end ? "flex-end" : "flex-start")};
  gap: ${({ $end }) => ($end ? "11px" : "4px")};

  span + svg {
    margin-left: ${({ $end }) => ($end ? "0" : "6px")};
  }
`;

const Toolbar = styled.div`
  display: flex;
  align-items: center;
  height: 168px;
  padding: 0 30px 0 48px;

  h1 {
    flex: 1;
    margin: 2px 0 0 96px;
    font-size: 42px;
    font-weight: 400;
    white-space: pre;
  }
`;

const IconButton = styled.button`
  flex: none;
  display: flex;
  padding: 0;
  border: 0;
  background: none;
  color: inherit;

  & + & {
    margin-left: 54px;
  }
  svg {
    width: 72px;
    height: 72px;
  }
`;

const Tabs = styled.nav`
  display: grid;
  grid-template-columns: repeat(3, 1fr);
  height: 144px;
`;

const Tab = styled.button`
  display: flex;
  align-items: center;
  justify-content: center;
  padding: 12px 0 0;
  border: 0;
  border-bottom: 12px solid ${({ $active }) => ($active ? "#fff" : "transparent")};
  background: none;
  color: ${({ $active }) => ($active ? "#fff" : "#c8dff5")};

  svg {
    width: 72px;
    height: 72px;
  }
`;

const MapWrapper = styled.section`
  position: relative;
  height: 888px;
`;

const MapCanvas = styled.svg`
  display: block;
  width: 100%;
  height: 100%;
`;

const TileGroup = styled.g`
  path {
    vector-effect: non-scaling-stroke;
  }
`;

const Line = styled.path`
  fill: none;
  stroke: ${({ $color }) => $color};
  stroke-width: ${({ $width }) => $width}px;
  stroke-linejoin: round;
`;

const Border = styled.path`
  fill: none;
  stroke: #737d73;
  stroke-width: 5px;
  stroke-dasharray: 10 10;
`;

const Route = styled.path`
  fill: none;
  stroke: #00f;
  stroke-width: 21px;
  stroke-linejoin: round;
`;

const MapLabel = styled.text`
  stroke: rgba(255, 255, 255, 0.5);
  stroke-width: 8px;
  stroke-linejoin: round;
  paint-order: stroke;
`;

const PlaceLabel = styled(MapLabel)`
  fill: #6a7889;
  font-size: 33px;
  font-weight: 500;
  text-anchor: middle;
`;

const CityLabel = styled(MapLabel)`
  fill: #6a7889;
  font-size: 54px;
  font-weight: 500;
  text-anchor: end;
`;

const PoiLabel = styled(MapLabel)`
  fill: ${({ $color }) => $color};
  font-size: 39px;
`;

const ParkLabel = styled(MapLabel)`
  fill: #1f7a1f;
  font-size: 39px;
  font-style: italic;
  font-weight: 500;
  text-anchor: middle;
`;

const RoadLabel = styled(MapLabel)`
  fill: #6f7a80;
  font-size: 31px;
`;

const ExitLabel = styled.text`
  fill: #454545;
  font-size: 28px;
  text-anchor: middle;
`;

const Logo = styled(MapLabel)`
  font-family: Lato, sans-serif;
  font-size: 52px;
  font-weight: 700;
`;

const ExpandButton = styled.button`
  position: absolute;
  right: 30px;
  bottom: 30px;
  display: flex;
  align-items: center;
  justify-content: center;
  width: 102px;
  height: 102px;
  padding: 0;
  border: 0;
  border-radius: 20px;
  background: rgba(255, 255, 255, 0.7);
`;

const Stats = styled.dl`
  margin: 0;
  padding: 9px 45px 9px;
`;

const Row = styled.div`
  display: flex;
  align-items: center;
  justify-content: space-between;
  height: 93px;
  color: #000;
  font-size: 48px;

  dt {
    display: flex;
    align-items: center;
    gap: 59px;
  }
  dt svg {
    color: var(--icon);
  }
  span,
  dd {
    margin: 0;
    padding-top: 4px;
  }
`;

const NavBar = styled.nav`
  display: flex;
  align-items: center;
  justify-content: center;
  gap: 213px;
  height: 144px;
  background: #f8f8f8;
`;

const NavButton = styled.button`
  display: flex;
  padding: 0;
  border: 0;
  background: none;

  svg {
    width: 72px;
    height: 72px;
    fill: none;
    stroke: #b5b5b5;
    stroke-width: 3px;
  }
`;

export default App;
